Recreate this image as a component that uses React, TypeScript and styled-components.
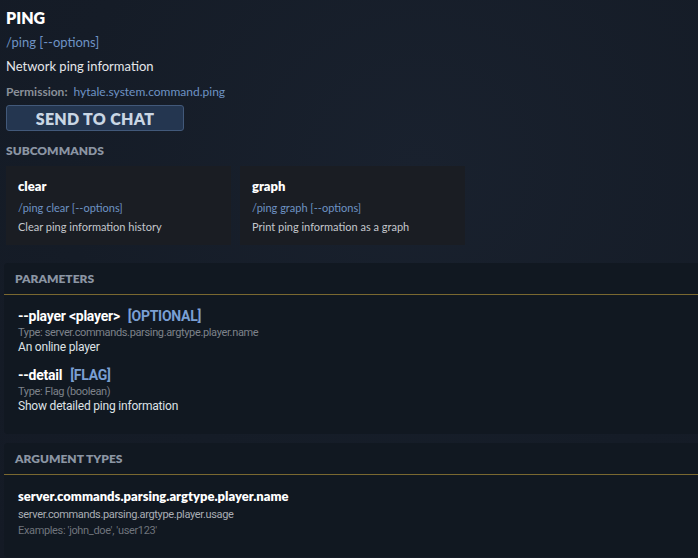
import styled, { createGlobalStyle } from 'styled-components';

const GlobalStyle = createGlobalStyle`
  html, body {
    margin: 0;
    padding: 0;
    background: #161e2a;
    overflow: hidden;
  }
  body {
    font-family: Lato, "Noto Sans", sans-serif;
    color: #e4e6ea;
  }
`;

// --- Estilos ---
const Page = styled.div`
  min-height: 558px;
  box-sizing: border-box;
  padding: 8px 0 0 6px;
  background: radial-gradient(ellipse at 60% 30%, #19212e 0%, #151c27 60%, #141a25 100%);
`;

const Title = styled.h1`
  margin: 0;
  font-size: 16px;
  font-weight: 800;
  color: #ffffff;
  line-height: 20px;
`;

const Usage = styled.div<{ $small?: boolean }>`
  color: #6e93c4;
  font-size: ${({ $small }) => ($small ? '11px' : '13px')};
  line-height: ${({ $small }) => ($small ? '14px' : '16px')};
`;

const TopUsage = styled(Usage)`
  margin-top: 6px;
`;

const Description = styled.p`
  margin: 8px 0 0;
  font-size: 13px;
  line-height: 16px;
  color: #e4e6ea;
`;

const Permission = styled.div`
  margin-top: 10px;
  font-size: 12px;
  line-height: 15px;
  display: flex;
  gap: 6px;
`;

const PermLabel = styled.span`
  font-weight: 700;
  color: #8a9099;
`;

const PermValue = styled.span`
  color: #6e93c4;
`;

const ChatButton = styled.button`
  display: block;
  margin-top: 6px;
  width: 178px;
  height: 26px;
  padding: 0;
  background: #243650;
  border: 1px solid #42597a;
  border-radius: 3px;
  color: #c9d6e4;
  font-family: Lato, "Noto Sans", sans-serif;
  font-size: 16px;
  font-weight: 800;
  letter-spacing: 0.3px;
  cursor: pointer;
`;

const SectionLabel = styled.h2`
  margin: 12px 0 0;
  font-size: 12px;
  font-weight: 800;
  color: #8b95a3;
  line-height: 16px;
`;

const CardRow = styled.div`
  display: flex;
  gap: 9px;
  margin-top: 7px;
`;

const Card = styled.div`
  width: 225px;
  height: 79px;
  box-sizing: border-box;
  padding: 12px;
  background: #1a1d23;
`;

const CardTitle = styled.div`
  font-size: 13px;
  font-weight: 800;
  color: #ffffff;
  line-height: 16px;
`;

const CardUsage = styled(Usage)`
  margin-top: 7px;
`;

const CardDesc = styled.div`
  margin-top: 5px;
  font-size: 11px;
  line-height: 14px;
  color: #c4c7cc;
`;

const Panel = styled.section<{ $gap: number }>`
  margin: ${({ $gap }) => $gap}px -20px 0 -2px;
  background: #111821;
  border-radius: 4px;
  font-family: Roboto, "Noto Sans", sans-serif;
`;

const PanelHeader = styled.div`
  padding: 8px 11px 0;
  height: 23px;
  font-family: Lato, "Noto Sans", sans-serif;
  font-size: 12px;
  font-weight: 800;
  color: #8b95a3;
  line-height: 15px;
  border-bottom: 1px solid #7a6830;
`;

const PanelBody = styled.div<{ $top: number; $bottom: number }>`
  padding: ${({ $top }) => $top}px 14px ${({ $bottom }) => $bottom}px;
  display: flex;
  flex-direction: column;
  gap: 12px;
`;

const Param = styled.div`
  display: flex;
  flex-direction: column;
`;

const ParamName = styled.div`
  font-size: 14px;
  font-weight: 700;
  color: #ffffff;
  line-height: 17px;
  letter-spacing: -0.25px;
`;

const Tag = styled.span`
  margin-left: 8px;
  color: #7a9fd3;
`;

const ParamType = styled.div`
  font-size: 11px;
  line-height: 15px;
  color: #7d828a;
  letter-spacing: -0.35px;
`;

const ParamDesc = styled.div`
  font-size: 12px;
  line-height: 15px;
  color: #dfe2e6;
  letter-spacing: -0.2px;
`;

const ArgName = styled.div`
  font-family: Lato, "Noto Sans", sans-serif;
  font-size: 13px;
  font-weight: 800;
  color: #ffffff;
  line-height: 16px;
`;

const ArgUsage = styled.div`
  margin-top: 3px;
  font-size: 11px;
  line-height: 16px;
  color: #a9adb4;
  letter-spacing: -0.35px;
`;

const ArgExamples = styled(ArgUsage)`
  margin-top: 0;
  color: #6f747c;
`;

const subcommands = [
  { name: 'clear', usage: '/ping clear [--options]', desc: 'Clear ping information history' },
  { name: 'graph', usage: '/ping graph [--options]', desc: 'Print ping information as a graph' },
];

const params = [
  { name: '--player <player>', tag: '[OPTIONAL]', type: 'Type: server.commands.parsing.argtype.player.name', desc: 'An online player' },
  { name: '--detail', tag: '[FLAG]', type: 'Type: Flag (boolean)', desc: 'Show detailed ping information' },
];

// --- Componente da Página ---
const App = () => {
  return (
    <>
      <GlobalStyle />
      <Page>
        <Title>PING</Title>
        <TopUsage>/ping [--options]</TopUsage>
        <Description>Network ping information</Description>
        <Permission>
          <PermLabel>Permission:</PermLabel>
          <PermValue>hytale.system.command.ping</PermValue>
        </Permission>
        <ChatButton type="button">SEND TO CHAT</ChatButton>

        <SectionLabel>SUBCOMMANDS</SectionLabel>
        <CardRow>
          {subcommands.map((sub) => (
            <Card key={sub.name}>
              <CardTitle>{sub.name}</CardTitle>
              <CardUsage $small>{sub.usage}</CardUsage>
              <CardDesc>{sub.desc}</CardDesc>
            </Card>
          ))}
        </CardRow>

        <Panel $gap={18}>
          <PanelHeader>PARAMETERS</PanelHeader>
          <PanelBody $top={13} $bottom={20}>
            {params.map((p) => (
              <Param key={p.name}>
                <ParamName>
                  {p.name}
                  <Tag>{p.tag}</Tag>
                </ParamName>
                <ParamType>{p.type}</ParamType>
                <ParamDesc>{p.desc}</ParamDesc>
              </Param>
            ))}
          </PanelBody>
        </Panel>

        <Panel $gap={9}>
          <PanelHeader>ARGUMENT TYPES</PanelHeader>
          <PanelBody $top={13} $bottom={18}>
            <Param>
              <ArgName>server.commands.parsing.argtype.player.name</ArgName>
              <ArgUsage>server.commands.parsing.argtype.player.usage</ArgUsage>
              <ArgExamples>Examples: 'john_doe', 'user123'</ArgExamples>
            </Param>
          </PanelBody>
        </Panel>
      </Page>
    </>
  );
};

export default App;
